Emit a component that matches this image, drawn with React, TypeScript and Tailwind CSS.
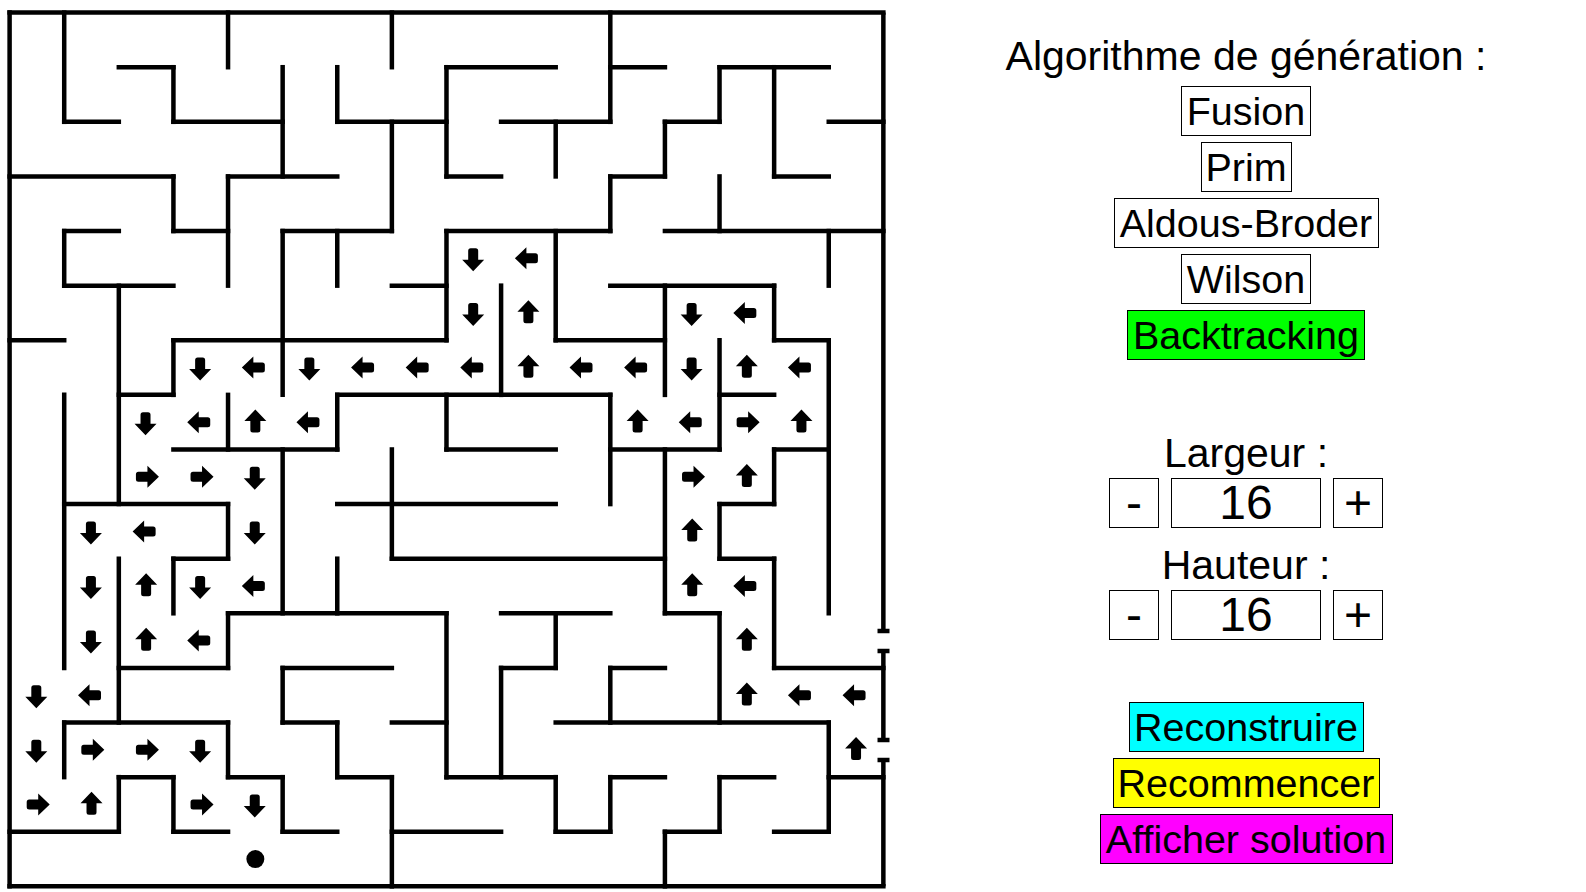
const STEP = 54.61
const px = (i: number) => 9.6 + STEP * i
const py = (j: number) => 12.6 + STEP * j

// walls in grid units: [line, from, to]
const horizontal: [number, number, number][] = [
    [0, 0, 16], [16, 0, 16],
    [1, 2, 3], [1, 8, 10], [1, 11, 12], [1, 13, 15],
    [2, 1, 2], [2, 3, 5], [2, 6, 8], [2, 9, 11], [2, 12, 13], [2, 15, 16],
    [3, 0, 3], [3, 4, 6], [3, 8, 9], [3, 11, 12], [3, 14, 15],
    [4, 1, 2], [4, 3, 4], [4, 5, 7], [4, 8, 11], [4, 12, 16],
    [5, 1, 3], [5, 7, 8], [5, 11, 14],
    [6, 0, 1], [6, 3, 8], [6, 10, 12], [6, 14, 15],
    [7, 2, 3], [7, 6, 11], [7, 13, 14],
    [8, 3, 6], [8, 8, 10], [8, 11, 13], [8, 14, 15],
    [9, 1, 4], [9, 6, 10], [9, 13, 14],
    [10, 3, 4], [10, 7, 12], [10, 13, 14],
    [11, 4, 8], [11, 9, 11], [11, 12, 13],
    [12, 2, 4], [12, 5, 7], [12, 9, 10], [12, 11, 12], [12, 14, 16],
    [13, 1, 4], [13, 5, 6], [13, 7, 8], [13, 10, 15],
    [14, 2, 3], [14, 4, 5], [14, 6, 7], [14, 8, 10], [14, 11, 12], [14, 13, 14], [14, 15, 16],
    [15, 0, 2], [15, 3, 4], [15, 5, 6], [15, 7, 9], [15, 10, 11], [15, 12, 13], [15, 14, 15],
]

const vertical: [number, number, number][] = [
    [0, 0, 16],
    [1, 0, 2], [1, 4, 5], [1, 7, 12], [1, 13, 14],
    [2, 5, 9], [2, 10, 13], [2, 14, 15],
    [3, 1, 2], [3, 3, 4], [3, 6, 7], [3, 10, 11], [3, 14, 15],
    [4, 0, 1], [4, 3, 5], [4, 7, 8], [4, 9, 10], [4, 11, 12], [4, 13, 14],
    [5, 1, 3], [5, 4, 7], [5, 8, 11], [5, 12, 13], [5, 14, 15],
    [6, 1, 2], [6, 4, 5], [6, 7, 8], [6, 10, 11], [6, 13, 14],
    [7, 0, 1], [7, 2, 4], [7, 8, 10], [7, 14, 16],
    [8, 1, 3], [8, 4, 6], [8, 7, 8], [8, 11, 14],
    [9, 5, 7], [9, 12, 14],
    [10, 2, 3], [10, 4, 6], [10, 11, 12], [10, 14, 15],
    [11, 0, 2], [11, 3, 4], [11, 7, 9], [11, 12, 13], [11, 14, 15],
    [12, 2, 3], [12, 5, 7], [12, 8, 11], [12, 15, 16],
    [13, 1, 2], [13, 3, 4], [13, 6, 8], [13, 9, 10], [13, 11, 13], [13, 14, 15],
    [14, 1, 3], [14, 5, 6], [14, 8, 9], [14, 10, 12],
    [15, 4, 5], [15, 6, 11], [15, 13, 15],
]

type Dir = "D" | "L" | "U" | "R"

// solution path, one string per row starting at row 4: "col+dir"
const arrows: [number, string][] = [
    [4, "8D 9L"],
    [5, "8D 9U 12D 13L"],
    [6, "3D 4L 5D 6L 7L 8L 9U 10L 11L 12D 13U 14L"],
    [7, "2D 3L 4U 5L 11U 12L 13R 14U"],
    [8, "2R 3R 4D 12R 13U"],
    [9, "1D 2L 4D 12U"],
    [10, "1D 2U 3D 4L 12U 13L"],
    [11, "1D 2U 3L 13U"],
    [12, "0D 1L 13U 14L 15L"],
    [13, "0D 1R 2R 3D 15U"],
    [14, "0R 1U 3R 4D"],
]

const arrowSetup: Record<Dir, { rot: number; dx: number; dy: number }> = {
    D: { rot: 0, dx: -0.6, dy: 1.5 },
    L: { rot: 90, dx: -2, dy: 0 },
    U: { rot: 180, dx: 0, dy: -1.3 },
    R: { rot: -90, dx: 1.3, dy: 0 },
}

function Maze() {
    return (
        <svg width="892" height="892" viewBox="0 0 892 892" className="block shrink-0 blur-[0.5px]">
            <g stroke="#000" strokeWidth="4.5" strokeLinecap="square">
                {horizontal.map(([j, a, b]) => (
                    <line key={`h${j}-${a}`} x1={px(a)} y1={py(j)} x2={px(b)} y2={py(j)} />
                ))}
                {vertical.map(([i, a, b]) => (
                    <line key={`v${i}-${a}`} x1={px(i)} y1={py(a)} x2={px(i)} y2={py(b)} />
                ))}
            </g>
            {/* right wall with the two openings */}
            <g stroke="#000" strokeWidth="4.5">
                <line x1={px(16)} y1={py(0)} x2={px(16)} y2="631" />
                <line x1="877.5" y1="631" x2="889.5" y2="631" />
                <line x1="877.5" y1="651" x2="889.5" y2="651" />
                <line x1={px(16)} y1="651" x2={px(16)} y2="740" />
                <line x1="877.5" y1="740" x2="889.5" y2="740" />
                <line x1="877.5" y1="760" x2="889.5" y2="760" />
                <line x1={px(16)} y1="760" x2={px(16)} y2={py(16)} />
            </g>
            {arrows.flatMap(([row, cells]) =>
                cells.split(" ").map(cell => {
                    const col = parseInt(cell)
                    const s = arrowSetup[cell.slice(-1) as Dir]
                    const x = px(col + 0.5) + s.dx
                    const y = py(row + 0.5) + s.dy
                    return (
                        <path
                            key={`${row}-${col}`}
                            transform={`translate(${x} ${y}) rotate(${s.rot})`}
                            d="M-5 -9 Q-5 -11.5 -2.5 -11.5 H2.5 Q5 -11.5 5 -9 V0 H11 L0 11.5 L-11 0 H-5 Z"
                        />
                    )
                })
            )}
            <circle cx={px(4.5)} cy={py(15.5)} r="9" />
        </svg>
    )
}

function TextButton({ label, className }: { label: string; className: string }) {
    return (
        <button className={`block h-[50px] border border-black text-center text-[39.5px] leading-[46px] text-black ${className}`}>
            {label}
        </button>
    )
}

function Stepper({ label }: { label: string }) {
    return (
        <div className="flex flex-col items-center gap-[3px]">
            <div className="text-[41px] leading-[44px]">{label}</div>
            <div className="flex items-center gap-3">
                <button className="h-[50px] w-[50px] border border-black text-[48px] leading-[46px]">-</button>
                <div className="h-[50px] w-[150px] border border-black text-center text-[48px] leading-[48px]">16</div>
                <button className="h-[50px] w-[50px] border border-black text-[48px] leading-[46px]">+</button>
            </div>
        </div>
    )
}

export default function App() {
    return (
        <div className="flex h-[892px] w-[1586px] overflow-hidden bg-white font-['Liberation_Sans',Arial,sans-serif] text-black">
            <Maze />
            <div className="ml-[14px] flex flex-1 flex-col items-center pt-[33px]">
                <div className="text-[41px] leading-[46px]">Algorithme de génération :</div>
                <div className="mt-[7px] flex flex-col items-center gap-1.5">
                    <TextButton label="Fusion" className="w-[130px] bg-white" />
                    <TextButton label="Prim" className="w-[91px] bg-white" />
                    <TextButton label="Aldous-Broder" className="w-[265px] bg-white" />
                    <TextButton label="Wilson" className="w-[130px] bg-white" />
                    <TextButton label="Backtracking" className="w-[238px] bg-[#00ff00]" />
                </div>
                <div className="mt-[71px] flex flex-col items-center gap-[15px]">
                    <Stepper label="Largeur :" />
                    <Stepper label="Hauteur :" />
                </div>
                <div className="mt-[62px] flex flex-col items-center gap-1.5">
                    <TextButton label="Reconstruire" className="w-[235px] bg-[#00ffff]" />
                    <TextButton label="Recommencer" className="w-[267px] bg-[#ffff00]" />
                    <TextButton label="Afficher solution" className="w-[293px] bg-[#ff00ff]" />
                </div>
            </div>
        </div>
    )
}
